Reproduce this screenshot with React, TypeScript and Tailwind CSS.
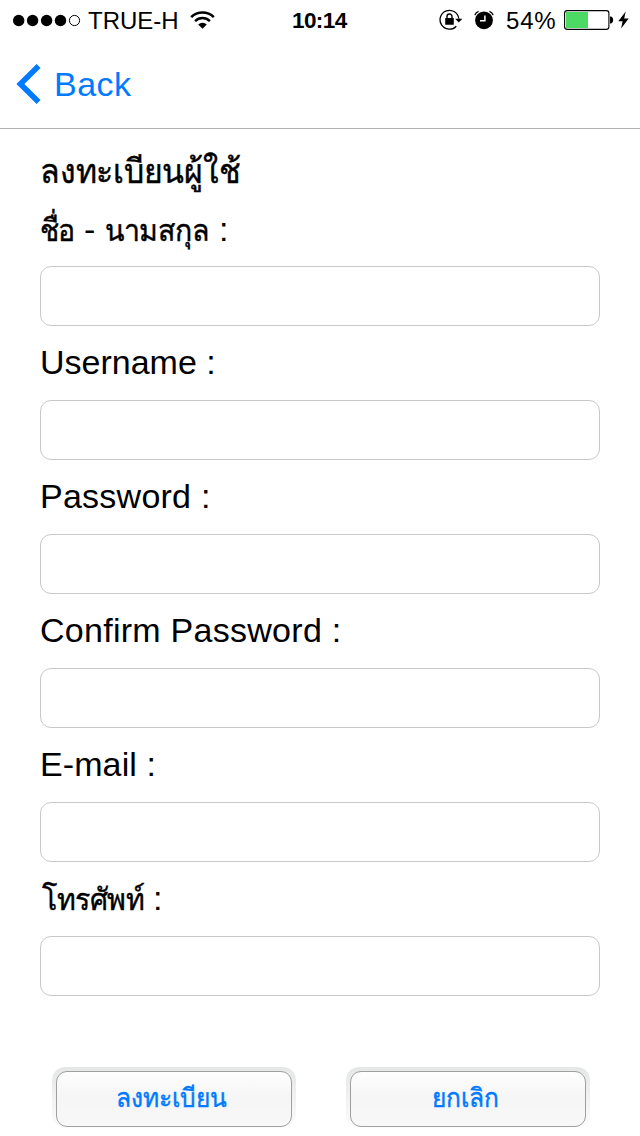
import React from "react";

type Field = { id: string; label: React.ReactNode; type: string; className: string };

const fields: Field[] = [
  {
    id: "name",
    label: (
      <>
        <span className="inline-block w-[34px] origin-[0_80%] scale-y-[1.08] text-[28.5px] tracking-[-0.9px] [-webkit-text-stroke:0.4px_#000]">ชื่อ</span>
        <span className="inline-block w-[31px] pl-[10px] text-[34px]">-</span>
        <span className="inline-block w-[105px] origin-[0_80%] scale-y-[1.08] text-[28.5px] tracking-[-0.3px] [-webkit-text-stroke:0.4px_#000]">นามสกุล</span>
        <span className="inline-block pl-[9px] text-[34px]">:</span>
      </>
    ),
    type: "text",
    className: "pb-[17px]",
  },
  { id: "username", label: "Username :", type: "text", className: "pb-[2px]" },
  { id: "password", label: "Password :", type: "password", className: "pb-[2px] tracking-[0.25px]" },
  { id: "confirm", label: "Confirm Password :", type: "password", className: "pb-[2px] tracking-[0.27px]" },
  { id: "email", label: "E-mail :", type: "email", className: "pb-[2px] tracking-[0.1px]" },
  {
    id: "phone",
    label: (
      <>
        <span className="ml-[2px] inline-block w-[104px] origin-[0_80%] scale-y-[1.08] text-[28.5px] tracking-[-0.4px] [-webkit-text-stroke:0.4px_#000]">โทรศัพท์</span>
        <span className="inline-block pl-[7px] text-[34px]">:</span>
      </>
    ),
    type: "tel",
    className: "pb-[2px]",
  },
];

function Signal() {
  return (
    <svg className="ml-[12px] h-[14px] w-[69px] shrink-0" viewBox="0 0 69 14">
      <circle cx="6.7" cy="7.5" r="5.7" />
      <circle cx="20.6" cy="7.5" r="5.7" />
      <circle cx="34.6" cy="7.5" r="5.7" />
      <circle cx="48.5" cy="7.5" r="5.7" />
      <circle cx="62.5" cy="7.5" r="5.1" fill="none" stroke="#000" strokeWidth="1" />
    </svg>
  );
}

function Wifi() {
  return (
    <svg className="h-[18px] w-[25px] shrink-0" viewBox="0 0 25 18" fill="none" stroke="#000">
      <path d="M1.2 6.1A16.2 16.2 0 0 1 23.8 6.1" strokeWidth="2.7" />
      <path d="M5.1 10.1A10.6 10.6 0 0 1 19.9 10.1" strokeWidth="2.5" />
      <path d="M12.5 17.7L8.2 13.4A6.1 6.1 0 0 1 16.8 13.4Z" fill="#000" stroke="none" />
    </svg>
  );
}

function RotationLock() {
  return (
    <svg className="h-[22px] w-[24px] shrink-0" viewBox="0 0 24 22">
      <path d="M19.8 9.8A9.4 9.4 0 1 0 17.3 17.2" fill="none" stroke="#000" strokeWidth="1.3" />
      <path d="M16.2 9.8H23.4L19.8 13.4Z" />
      <rect x="6.2" y="9" width="8.6" height="6.8" rx=".5" />
      <path d="M8 9.5V7.5A2.5 2.5 0 0 1 13 7.5V9.5" fill="none" stroke="#000" strokeWidth="1.4" />
    </svg>
  );
}

function Alarm() {
  return (
    <svg className="h-[20px] w-[20px] shrink-0" viewBox="0 0 20 20">
      <circle cx="10" cy="10.3" r="8.9" />
      <path d="M.9 5.2Q1.6 2.4 4.6 1.4M15.4 1.4Q18.4 2.4 19.1 5.2" fill="none" stroke="#000" strokeWidth="1.4" />
      <path d="M10.9 5.5V10.7H6" fill="none" stroke="#fff" strokeWidth="1.5" />
    </svg>
  );
}

function Battery() {
  return (
    <svg className="h-[20px] w-[50px] shrink-0" viewBox="0 0 50 20">
      <rect x=".6" y=".6" width="44.3" height="18.8" rx="2.6" fill="#fff" stroke="#000" strokeWidth="1.1" />
      <rect x="2" y="2" width="22" height="16" fill="#4cd964" />
      <path d="M46 6.5H47.2Q49.2 7.3 49.2 10T47.2 13.5H46Z" />
    </svg>
  );
}

function StatusBar() {
  return (
    <header className="relative flex h-10 items-center text-[24px] leading-10">
      <Signal />
      <span className="ml-[7px] w-[102px] pt-px whitespace-nowrap">TRUE-H</span>
      <Wifi />
      <time className="absolute top-px left-[292px] text-[22.5px] font-bold tracking-[-0.6px]">10:14</time>
      <div className="ml-auto flex items-center pr-[11px]">
        <RotationLock />
        <span className="w-[11px]" />
        <Alarm />
        <span className="ml-[12px] w-[58px] pt-px tracking-[0.8px]">54%</span>
        <Battery />
        <svg className="ml-[4px] h-[18px] w-[11px]" viewBox="0 0 11 18">
          <path d="M7.7.5L.3 10.2H4.6L3.1 17.5L10.7 7.6H6.2Z" />
        </svg>
      </div>
    </header>
  );
}

function ActionButton({ children }: { children: React.ReactNode }) {
  return (
    <button
      type="button"
      className="h-[61px] w-[244px] rounded-[13px] bg-linear-to-b from-[#e5e7e7] to-[#fcfcfc] px-[4px] pt-[4px] pb-px text-[#007aff]"
    >
      <span className="flex h-full items-center justify-center rounded-[11px] border-[1.5px] border-[#a0a0a0] bg-linear-to-b from-[#fefefe] via-[#f5f5f5] to-[#f8f8f8] pr-[6px] pb-[2px] text-[24.5px] leading-none [-webkit-text-stroke:0.4px_#007aff]">
        <span className="inline-block scale-y-[1.08]">{children}</span>
      </span>
    </button>
  );
}

export default function App() {
  return (
    <div className="flex h-[1136px] w-[640px] flex-col overflow-hidden bg-white font-['Liberation_Sans','Noto_Sans',sans-serif] text-black">
      <StatusBar />
      <nav className="flex h-[89px] items-center border-b border-[#b2b2b2]">
        <button type="button" className="ml-4 flex items-center text-[34px] text-[#007aff]">
          <svg className="h-[42px] w-[25px]" viewBox="0 0 25 42" fill="none" stroke="#007aff" strokeWidth="5.6">
            <path d="M22.6 3L4.4 21L22.6 39" />
          </svg>
          <span className="ml-[13px] tracking-[0.5px]">Back</span>
        </button>
      </nav>
      <form className="flex flex-1 flex-col px-10">
        <h1 className="flex h-[80px] items-center pt-[5px] text-[32px] leading-none tracking-[-0.25px] whitespace-nowrap [-webkit-text-stroke:0.4px_#000]">
          <span className="inline-block origin-[0_80%] scale-y-[1.06]">ลงทะเบียนผู้ใช้</span>
        </h1>
        {fields.map((f, i) => (
          <div key={f.id} className="flex flex-col">
            <label
              htmlFor={f.id}
              className={(i === 0 ? "h-[57px] " : "h-[74px] ") + "flex items-center text-[34px] leading-none whitespace-nowrap " + f.className}
            >
              <span className="flex items-baseline">{typeof f.label === "string" ? <span>{f.label}</span> : f.label}</span>
            </label>
            <input id={f.id} type={f.type} className="h-[60px] w-full rounded-[11px] border border-[#c8c8c8] bg-white px-4 text-[28px] outline-none" />
          </div>
        ))}
        <div className="mt-[71px] flex gap-[50px] pl-[12px]">
          <ActionButton>ลงทะเบียน</ActionButton>
          <ActionButton>ยกเลิก</ActionButton>
        </div>
      </form>
    </div>
  );
}
